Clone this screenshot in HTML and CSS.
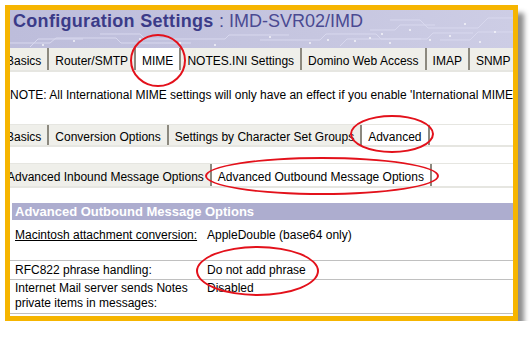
FILE: index.html
```html
<!DOCTYPE html>
<html lang="en">
<head>
  <meta charset="UTF-8" />
  <title>Configuration Settings</title>
  <link rel="stylesheet" href="styles.css">
</head>
<body>

  <!-- SCREENSHOT FRAME -->
  <div class="frame">
    <div class="banner">
      <h1 class="title">Configuration Settings <span class="server">: IMD-SVR02/IMD</span></h1>
    </div>

    <div class="tabs tabs-top">
      <span class="tab">Basics</span>
      <span class="tab">Router/SMTP</span>
      <span class="tab on">MIME</span>
      <span class="tab">NOTES.INI Settings</span>
      <span class="tab">Domino Web Access</span>
      <span class="tab">IMAP</span>
      <span class="tab">SNMP</span>
    </div>

    <p class="note">NOTE: All International MIME settings will only have an effect if you enable 'International MIME settings for this document' on the Basics tab.</p>

    <div class="tabs tabs-sub">
      <span class="tab">Basics</span>
      <span class="tab">Conversion Options</span>
      <span class="tab">Settings by Character Set Groups</span>
      <span class="tab on">Advanced</span>
    </div>

    <div class="tabs tabs-msg">
      <span class="tab">Advanced Inbound Message Options</span>
      <span class="tab on">Advanced Outbound Message Options</span>
    </div>

    <div class="section">Advanced Outbound Message Options</div>

    <div class="field first">
      <div class="label"><u>Macintosh attachment conversion:</u></div>
      <div class="value">AppleDouble (base64 only)</div>
    </div>
    <div class="field second">
      <div class="label">RFC822 phrase handling:</div>
      <div class="value">Do not add phrase</div>
    </div>
    <div class="field third">
      <div class="label">Internet Mail server sends Notes private items in messages:</div>
      <div class="value">Disabled</div>
    </div>
  </div>

  <!-- RED MARKS -->
  <div class="mark mark-mime"></div>
  <div class="mark mark-adv"></div>
  <div class="mark mark-out"></div>
  <div class="mark mark-phrase"></div>

</body>
</html>
```

FILE: styles.css
```css
body {
  margin: 0;
  font-family: "Liberation Sans", Arial, sans-serif;
  font-size: 12px;
  color: #000;
  background-color: #fff;
}

/* Frame */
.frame {
  width: 503px;
  height: 306px;
  margin: 5px 0 0 5px;
  border: 5px solid #f6b500;
  background-color: #fff;
  overflow: hidden;
  box-shadow: 6px 8px 5px rgba(0,0,0,0.45);
}

/* Banner */
.banner {
  height: 38px;
  padding: 1px 0 0 3px;
  box-sizing: border-box;
  background: url("data:image/svg+xml,%3Csvg xmlns='http://www.w3.org/2000/svg' width='503' height='38'%3E%3Cg fill='none' stroke='%23d8d8ee' stroke-width='1'%3E%3Cpath d='M0 33h40l6-5h60l5 5h70'/%3E%3Cpath d='M20 37l8-8h45'/%3E%3Cpath d='M90 24h40l5 5h80l4-4h60'/%3E%3Cpath d='M250 30h60l6-6h50l5 5h40'/%3E%3Cpath d='M330 36l7-7h80l6-6h40'/%3E%3Cpath d='M380 10h30l8 8h50l10-10h30'/%3E%3Cpath d='M430 30h30l8-8h40'/%3E%3Cpath d='M360 20h25l5-5h35'/%3E%3C/g%3E%3Cg fill='%23ffffff' fill-opacity='0.8'%3E%3Ccircle cx='33' cy='35' r='1'/%3E%3Ccircle cx='64' cy='31' r='1'/%3E%3Ccircle cx='130' cy='29' r='1'/%3E%3Ccircle cx='170' cy='33' r='1'/%3E%3Ccircle cx='205' cy='35' r='1'/%3E%3Ccircle cx='260' cy='27' r='1'/%3E%3Ccircle cx='300' cy='33' r='1'/%3E%3Ccircle cx='318' cy='30' r='1'/%3E%3Ccircle cx='345' cy='31' r='1'/%3E%3Ccircle cx='360' cy='28' r='1'/%3E%3Ccircle cx='380' cy='33' r='1'/%3E%3Ccircle cx='372' cy='24' r='1'/%3E%3Ccircle cx='400' cy='20' r='1'/%3E%3Ccircle cx='420' cy='30' r='1'/%3E%3Ccircle cx='440' cy='26' r='1'/%3E%3Ccircle cx='455' cy='14' r='1'/%3E%3Ccircle cx='470' cy='32' r='1'/%3E%3Ccircle cx='485' cy='22' r='1'/%3E%3C/g%3E%3C/svg%3E") no-repeat, linear-gradient(to right, #bdbddb, #c6c6e0 60%, #cdcde5);
}

.title {
  margin: 0;
  font-size: 18px;
  line-height: 20px;
  font-weight: bold;
  letter-spacing: 0.3px;
  color: #3b3b88;
  white-space: nowrap;
}

.server {
  font-weight: normal;
  letter-spacing: 0;
  color: #4a4a92;
}

/* Tabs */
.tabs {
  display: flex;
  white-space: nowrap;
  border-bottom: 2px solid #e6e6e1;
}

.tab {
  padding: 6px 6px 2px;
  line-height: 14px;
  background-color: #efefea;
  border-right: 2px solid #8c897f;
}

.tab.on {
  background-color: #fff;
}

.tabs-top {
  margin-left: -10px;
}

.tabs-sub {
  margin: 22px 0 0 -10px;
  border-top: 1px solid #e6e6e1;
}

.tabs-sub .tab {
  padding: 5px 6px 1px;
}

.tabs-msg {
  margin: 16px 0 0 -9px;
  border-top: 1px solid #e6e6e1;
}

.note {
  margin: 16px 0 0;
  line-height: 14px;
  white-space: nowrap;
}

/* Section */
.section {
  margin: 15px 0 0 2px;
  padding-left: 3px;
  height: 17px;
  line-height: 17px;
  font-size: 13px;
  font-weight: bold;
  color: #fff;
  background-color: #adadcf;
}

.field {
  display: grid;
  grid-template-columns: 197px 1fr;
  line-height: 15px;
  border-bottom: 1px solid #c0c0c0;
}

.field .label {
  padding-left: 5px;
  padding-right: 5px;
}

.first {
  padding: 8px 0 17px;
}

.second {
  padding: 2px 0 1px;
}

.third {
  padding: 1px 0 2px;
}

/* Red marks */
.mark {
  position: absolute;
  border: 2px solid #e3111b;
  border-radius: 50%;
  box-sizing: border-box;
}

.mark-mime   { left: 130px; top: 34px;  width: 56px;  height: 53px; }
.mark-adv    { left: 350px; top: 115px; width: 84px;  height: 38px; }
.mark-out    { left: 205px; top: 157px; width: 234px; height: 38px; }
.mark-phrase { left: 196px; top: 246px; width: 123px; height: 50px; }
```
